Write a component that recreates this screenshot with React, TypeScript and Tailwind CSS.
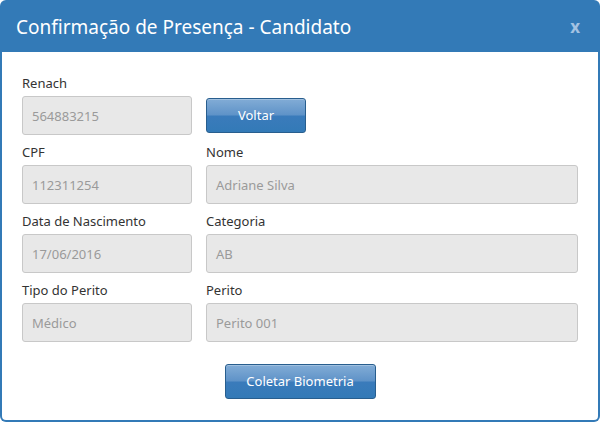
export default function App() {
  const inputCls =
    'h-[39px] w-full rounded-[3px] border border-[#c8c8c8] bg-[#e8e8e8] px-[9px] pt-[2px] flex items-center text-[13px] text-[#9a9a9a]'
  const labelCls = 'h-[20px] mb-[3px] text-[13px] leading-[20px] text-[#333]'
  const btnCls =
    'rounded-[3px] border border-[#285e8e] bg-[linear-gradient(to_bottom,#82acd6_0%,#5f93c8_48%,#3a7bbb_52%,#337ab7_100%)] text-white text-[13px] shadow-[inset_0_1px_0_rgba(255,255,255,0.25)]'

  const rows = [
    [
      { label: 'CPF', value: '112311254' },
      { label: 'Nome', value: 'Adriane Silva' },
    ],
    [
      { label: 'Data de Nascimento', value: '17/06/2016' },
      { label: 'Categoria', value: 'AB' },
    ],
    [
      { label: 'Tipo do Perito', value: 'Médico' },
      { label: 'Perito', value: 'Perito 001' },
    ],
  ]

  return (
    <div
      className="w-[600px] h-[422px] bg-white"
      style={{ fontFamily: '"Noto Sans", "Open Sans", sans-serif' }}
    >
      <div className="flex h-full w-full flex-col rounded-[6px] bg-[#337ab7] p-[2px]">
        {/* header */}
        <div className="flex h-[50px] items-center justify-between pl-[14px] pr-[18px]">
          <h1 className="text-[19px] text-white">Confirmação de Presença - Candidato</h1>
          <span className="text-[17px] font-bold text-[#a3c2e2]">x</span>
        </div>

        {/* body */}
        <div className="flex flex-1 flex-col rounded-b-[4px] bg-white px-[20px] pt-[21px]">
          <div className="grid grid-cols-[170px_1fr] gap-x-[14px]">
            <div>
              <div className={labelCls}>Renach</div>
              <div className={inputCls}>564883215</div>
            </div>
            <div className="pt-[25px]">
              <button className={`${btnCls} h-[35px] w-[100px]`}>Voltar</button>
            </div>
          </div>

          {rows.map((row, i) => (
            <div key={i} className="mt-[7px] grid grid-cols-[170px_1fr] gap-x-[14px]">
              {row.map((f) => (
                <div key={f.label}>
                  <div className={labelCls}>{f.label}</div>
                  <div className={inputCls}>{f.value}</div>
                </div>
              ))}
            </div>
          ))}

          <div className="mt-[22px] flex justify-center">
            <button className={`${btnCls} h-[35px] w-[151px]`}>Coletar Biometria</button>
          </div>
        </div>
      </div>
    </div>
  )
}
